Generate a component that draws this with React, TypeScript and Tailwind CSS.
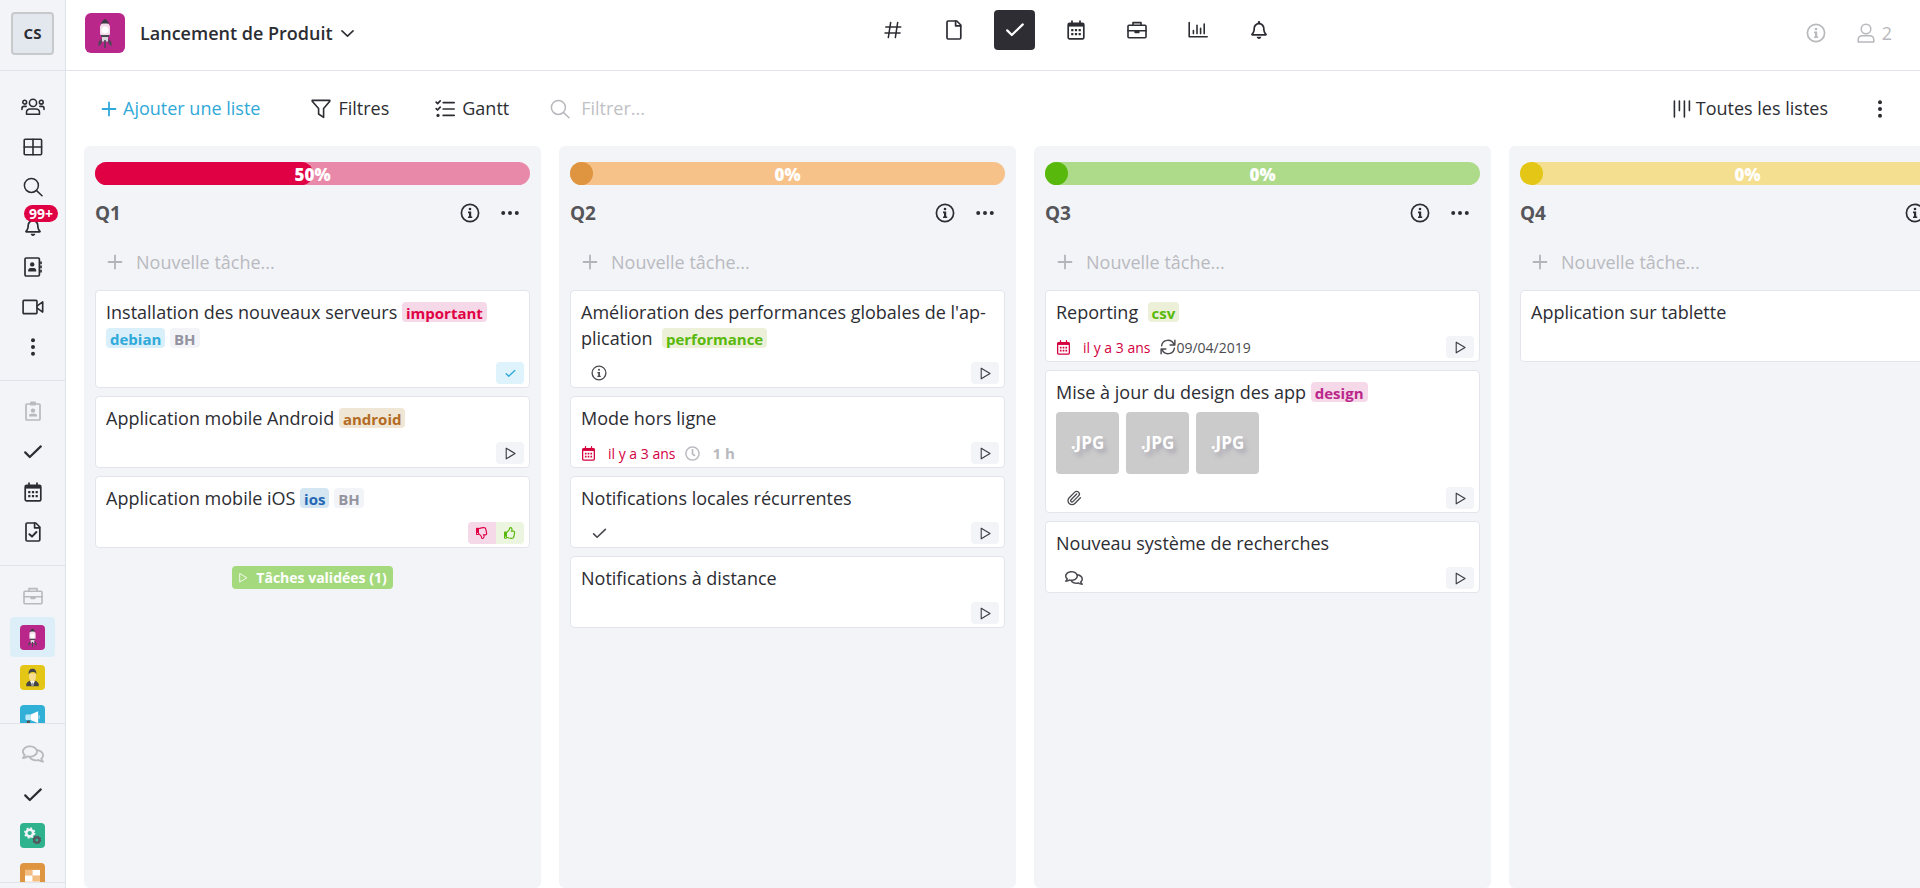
import { useState, type ReactNode } from "react";
import clsx from "clsx";
import { Paperclip } from "lucide-react";
import { FaRegBell, FaRegClock, FaRegComments, FaRegThumbsDown, FaRegThumbsUp } from "react-icons/fa";

interface Tag {
  label: string;
  color: string;
}

interface Task {
  title: string;
  tags?: Tag[];
  meta?: ReactNode;
  thumbs?: number;
  action?: "play" | "done" | "review" | "none";
}

interface List {
  name: string;
  progress: number;
  track: string;
  fill: string;
  tasks: Task[];
  validated?: number;
  wide?: boolean;
}

interface IconProps {
  size?: number;
  width?: number;
  children?: ReactNode;
}

function Icon({ size = 20, width = 1.6, children }: IconProps) {
  return (
    <svg
      width={size}
      height={size}
      viewBox="0 0 20 20"
      fill="none"
      stroke="currentColor"
      strokeWidth={width}
      strokeLinejoin="round"
      strokeLinecap="round"
      className="shrink-0"
      aria-hidden="true"
    >
      {children}
    </svg>
  );
}

const solid = { fill: "currentColor", stroke: "none" };

const UsersIcon = () => (
  <Icon size={24} width={1.3}>
    <circle cx="10" cy="6.6" r="3" />
    <circle cx="3.1" cy="6" r="1.6" />
    <circle cx="16.9" cy="6" r="1.6" />
    <path d="M4.6 16v-1.6a2.8 2.8 0 0 1 2.8-2.8h5.2a2.8 2.8 0 0 1 2.8 2.8V16z" />
    <path d="M.8 12v-.8c0-1 .8-1.7 1.7-1.7h1.8M19.2 12v-.8c0-1-.8-1.7-1.7-1.7h-1.8" />
  </Icon>
);

const TableIcon = () => (
  <Icon>
    <rect x="1.2" y="2.2" width="17.4" height="15.6" rx="1" />
    <path d="M10 2.2v15.6M1.2 10h17.4" />
  </Icon>
);

const SearchIcon = () => (
  <Icon width={1.5}>
    <circle cx="8.4" cy="8.4" r="7" />
    <path d="M13.6 13.6l5.4 5.2" />
  </Icon>
);

const ContactIcon = () => (
  <Icon width={1.7}>
    <rect x="2" y="1" width="14.4" height="18" rx="1.2" />
    <circle cx="9.2" cy="7.4" r="2.2" {...solid} />
    <path d="M5.2 14.4v-1c0-1.4 1-2.4 2.2-2.4H11c1.2 0 2.2 1 2.2 2.4v1z" {...solid} />
    <path d="M18 5v1.4M18 9.2v1.4M18 13.4v1.4" />
  </Icon>
);

const VideoIcon = () => (
  <Icon size={22} width={1.5}>
    <rect x="1" y="4" width="12.6" height="12" rx=".8" />
    <path d="M13.8 9l5-3.6v9.2l-5-3.6" />
  </Icon>
);

const BadgeIcon = () => (
  <Icon width={1.7}>
    <rect x="3" y="3" width="14" height="16" rx="1" />
    <path d="M8 3.6V1.4h4v2.2z" />
    <circle cx="10" cy="9.6" r="2.2" {...solid} />
    <path d="M6 15.6v-.8c0-1.2.9-2 2-2h4c1.1 0 2 .8 2 2v.8z" {...solid} />
  </Icon>
);

const CheckIcon = ({ size = 20, width = 2.2 }: IconProps) => (
  <Icon size={size} width={width}>
    <path d="M2.2 10.4l4.6 4.6L17.8 4.4" />
  </Icon>
);

const CalendarIcon = ({ size = 20 }: IconProps) => (
  <Icon size={size} width={1.7}>
    <rect x="2.2" y="3.4" width="15.6" height="15.4" rx="1.4" />
    <path d="M2.2 3.4h15.6v3.2H2.2z" {...solid} />
    <path d="M6 1v3M14 1v3" />
    <path
      d="M5.2 9h2.2v2.2H5.2zM8.9 9h2.2v2.2H8.9zM12.6 9h2.2v2.2h-2.2zM5.2 13h2.2v2.2H5.2zM8.9 13h2.2v2.2H8.9zM12.6 13h2.2v2.2h-2.2z"
      {...solid}
    />
  </Icon>
);

const FileIcon = ({ checked = false }: { checked?: boolean }) => (
  <Icon width={1.7}>
    <path d="M4.2 1h8.6l4 4v12.800a1.200 1.200 0 0 1-1.200 1.200H4.200A1.200 1.200 0 0 1 3 17.800V2.200A1.200 1.200 0 0 1 4.200 1z" />
    <path d="M11.6 1.2v4.6h5" />
    {checked && <path d="M6.4 12.2l2.6 2.4 4.4-4.6" strokeWidth={2} />}
  </Icon>
);

const BriefcaseIcon = () => (
  <Icon>
    <rect x="1" y="5.2" width="18" height="12.6" rx="1" />
    <path d="M6 5V2.6h8V5M1 10.8h18M8.2 10.8v1.6h3.6v-1.6" />
  </Icon>
);

const HashIcon = () => (
  <Icon size={18} width={1.7}>
    <path d="M7.4 1.6L4.8 18.4M15.2 1.6l-2.6 16.8M2 6.6h16.6M1.2 13.4h16.6" />
  </Icon>
);

const ChartIcon = () => (
  <Icon width={1.6}>
    <path d="M1.2 2.6v14.2h18M5.4 10.6v3M9 5.4v8.2M12.6 8.2v5.4M16.2 4v9.6" />
  </Icon>
);

const UserIcon = () => (
  <Icon width={1.5}>
    <circle cx="10" cy="6" r="4.8" />
    <path d="M2.2 19v-2c0-2.6 1.8-4.2 4.2-4.2h7.2c2.4 0 4.2 1.6 4.2 4.2v2z" />
  </Icon>
);

const InfoIcon = ({ size = 20 }: IconProps) => (
  <Icon size={size} width={1.7}>
    <circle cx="10" cy="10" r="8.6" />
    <circle cx="10" cy="6" r="1.3" {...solid} />
    <path d="M8 8.6h3.2v4.8h1V15H8v-1.6h1v-3.2H8z" {...solid} />
  </Icon>
);

const FilterIcon = () => (
  <Icon>
    <path d="M1.2 1.4h17.6v.8l-6.2 7.4v8.800l-5-3.400V9.600L1.200 2.200z" />
  </Icon>
);

const GanttIcon = () => (
  <Icon width={1.7}>
    <path d="M8.2 3.6h11M8.2 10h11M8.2 16.4h11M1.2 3.2l1.4 1.4 2.6-2.8M1.2 9.6l1.4 1.4 2.6-2.8" />
    <circle cx="3" cy="16.4" r="1.6" {...solid} />
  </Icon>
);

const BarsIcon = () => (
  <Icon width={1.6}>
    <path d="M2.4 2v16M7.4 2v9.600M12.400 2v16M17.400 2v9.600" />
  </Icon>
);

const PlusIcon = () => (
  <Icon size={18} width={2}>
    <path d="M2.8 10h14.4M10 2.8v14.4" />
  </Icon>
);

const PlayIcon = ({ size = 13 }: IconProps) => (
  <Icon size={size} width={1.7}>
    <path d="M3.4 1.8v16.4L17 10z" />
  </Icon>
);

const SyncIcon = () => (
  <Icon size={16} width={1.8}>
    <path d="M2 8.6A8 8 0 0 1 17.4 6.8M18 11.4A8 8 0 0 1 2.6 13.2M18.6 1.6v6h-6M1.4 18.4v-6h6" />
  </Icon>
);

const DotsIcon = ({ vertical = false }: { vertical?: boolean }) => (
  <Icon>
    {[3.2, 10, 16.8].map((p) => (
      <circle key={p} cx={vertical ? 10 : p} cy={vertical ? p : 10} r="2" {...solid} />
    ))}
  </Icon>
);

const tileColors = {
  rocket: "bg-[#ba278b]",
  manager: "bg-[#e4c716]",
  megaphone: "bg-[#30b0d6]",
  gears: "bg-[#2fb38f]",
  board: "bg-[#df9440]",
};

const drawings = {
  rocket: (
    <g>
      <path d="M16 11.500c0-2.400 2-4.500 4-5.500 2 1 4 3.100 4 5.500z" fill="#3c3c46" />
      <path d="M15 14c0-2 1.500-3.600 3-3.600h4c1.500 0 3 1.600 3 3.600v7l-1 1.500h-8L15 21z" fill="#f3dcea" />
      <circle cx="20" cy="17" r="3.6" fill="#fff" />
      <path d="M16 22h8v2h-8z" fill="#4a4a55" />
      <path d="M17 24h6v4.500h-6z" fill="#d5d5da" />
      <path d="M16.600 25.500L13.500 29v4.500l3.100-3zM23.400 25.500l3.100 3.500v4.500l-3.100-3zM19.200 27h1.600v8h-1.600z" fill="#4a4a55" />
    </g>
  ),
  manager: (
    <g>
      <path d="M10 34v-3c0-3 3-5 6-6h8c3 1 6 3 6 6v3z" fill="#444" />
      <path d="M16 25l4 9 4-9z" fill="#fff" />
      <path d="M19 28h2l1 6h-4z" fill="#999" />
      <path d="M14.5 13h11v6c0 4-2.500 7-5.500 7s-5.500-3-5.500-7z" fill="#f6dd90" />
      <path d="M14 15c-1-6 2-9 6-9s7 3 6 9c-1-3-2-4-4-4-3 0-6 0-8 4z" fill="#444" />
    </g>
  ),
  megaphone: (
    <g>
      <path d="M10 15h7v9h-7c-2 0-2-9 0-9z" fill="#b9e8f7" />
      <path d="M17 15l12-5v19l-12-5z" fill="#fff" />
      <path d="M30 15c2 2 2 6 0 8z" fill="#d9f2fb" />
      <path d="M11 25h5v8h-5z" fill="#555" />
    </g>
  ),
  gears: (
    <g fill="none">
      <circle cx="15.5" cy="16" r="5.4" stroke="#f2f5f7" strokeWidth="4" />
      <circle cx="15.5" cy="16" r="7.8" stroke="#f2f5f7" strokeWidth="2.6" strokeDasharray="3 3.12" />
      <circle cx="27" cy="27" r="4.2" stroke="#55555f" strokeWidth="3.6" />
      <circle cx="27" cy="27" r="6" stroke="#55555f" strokeWidth="2" strokeDasharray="2.4 2.3" />
    </g>
  ),
  board: (
    <g>
      <path d="M8 11h24v24H8z" fill="#fbe3c6" />
      <path d="M20 11h12v9H20zM8 20h12v9H8z" fill="#fff" />
      <path d="M8 11h12v9H8zM20 20h12v9H20z" fill="#f4bd82" />
    </g>
  ),
};

function Tile({ kind, large = false }: { kind: keyof typeof tileColors; large?: boolean }) {
  return (
    <span className={clsx("flex items-center justify-center", tileColors[kind], large ? "size-10 rounded-md" : "size-[25px] rounded")}>
      <svg viewBox="0 0 40 40" className="size-full" aria-hidden="true">
        {drawings[kind]}
      </svg>
    </span>
  );
}

const tagColors: Record<string, string> = {
  red: "bg-[#f6d9e8] text-[#df0144]",
  cyan: "bg-[#d9f0fa] text-[#30a9d9]",
  gray: "bg-[#f3f4f8] text-[#93939f]",
  brown: "bg-[#f0e6d5] text-[#b36b24]",
  blue: "bg-[#d3e6f2] text-[#2467b3]",
  green: "bg-[#ecf0d8] text-[#58b90c]",
  pink: "bg-[#f6d9e8] text-[#ba278b]",
};

const lists: List[] = [
  {
    name: "Q1",
    progress: 50,
    track: "bg-[#e989a9]",
    fill: "bg-[#df0144]",
    validated: 1,
    tasks: [
      {
        title: "Installation des nouveaux serveurs",
        tags: [
          { label: "important", color: "red" },
          { label: "debian", color: "cyan" },
          { label: "BH", color: "gray" },
        ],
        action: "done",
      },
      { title: "Application mobile Android", tags: [{ label: "android", color: "brown" }] },
      {
        title: "Application mobile iOS",
        tags: [
          { label: "ios", color: "blue" },
          { label: "BH", color: "gray" },
        ],
        action: "review",
      },
    ],
  },
  {
    name: "Q2",
    progress: 0,
    track: "bg-[#f7c28a]",
    fill: "bg-[#df9440]",
    tasks: [
      {
        title: "Amélioration des performances globales de l'ap\u00adplication\u00a0",
        tags: [{ label: "performance", color: "green" }],
        meta: <MetaIcon><InfoIcon size={16} /></MetaIcon>,
      },
      {
        title: "Mode hors ligne",
        meta: (
          <>
            <DueDate />
            <span className="ml-2.5 flex items-center gap-3 text-[15px] font-bold text-[#b8b8bd]">
              <FaRegClock size={15} />1 h
            </span>
          </>
        ),
      },
      { title: "Notifications locales récurrentes", meta: <MetaIcon><CheckIcon size={15} /></MetaIcon> },
      { title: "Notifications à distance" },
    ],
  },
  {
    name: "Q3",
    progress: 0,
    track: "bg-[#addb8a]",
    fill: "bg-[#58b90c]",
    tasks: [
      {
        title: "Reporting\u00a0",
        tags: [{ label: "csv", color: "green" }],
        meta: (
          <>
            <DueDate />
            <span className="ml-2.5 flex items-center">
              <SyncIcon />09/04/2019
            </span>
          </>
        ),
      },
      {
        title: "Mise à jour du design des app",
        tags: [{ label: "design", color: "pink" }],
        thumbs: 3,
        meta: <MetaIcon><Paperclip size={16} strokeWidth={2} /></MetaIcon>,
      },
      { title: "Nouveau système de recherches", meta: <MetaIcon><FaRegComments size={18} /></MetaIcon> },
    ],
  },
  {
    name: "Q4",
    progress: 0,
    track: "bg-[#f4de8f]",
    fill: "bg-[#e4c716]",
    wide: true,
    tasks: [{ title: "Application sur tablette", action: "none" }],
  },
];

function MetaIcon({ children }: { children: ReactNode }) {
  return <span className="flex w-9 justify-center">{children}</span>;
}

function DueDate() {
  return (
    <span className="flex items-center gap-3 text-[#d4003f]">
      <CalendarIcon size={15} />
      il y a 3 ans
    </span>
  );
}

function TaskAction({ action = "play" }: { action?: Task["action"] }) {
  if (action === "none") return null;
  if (action === "done") {
    return (
      <button aria-label="Terminée" className="flex h-[22px] w-7 items-center justify-center rounded bg-[#def3fb] text-[#30a9d9]">
        <CheckIcon size={11} width={2.4} />
      </button>
    );
  }
  if (action === "review") {
    return (
      <div className="flex">
        <button aria-label="Refuser" className="flex h-[22px] w-7 items-center justify-center rounded-l bg-[#f6d9e8] text-[#df0144]">
          <FaRegThumbsDown size={12} />
        </button>
        <button aria-label="Valider" className="flex h-[22px] w-7 items-center justify-center rounded-r bg-[#ecf5df] text-[#58b90c]">
          <FaRegThumbsUp size={12} />
        </button>
      </div>
    );
  }
  return (
    <button aria-label="Démarrer" className="flex h-[22px] w-7 items-center justify-center rounded bg-[#f3f4f8] text-[#3a3b42]">
      <PlayIcon />
    </button>
  );
}

function TaskCard({ task }: { task: Task }) {
  return (
    <li className="rounded border border-[#e2e5ec] bg-white pt-2 pr-[5px] pb-[3px] pl-2.5">
      <h3 className="text-[18px] leading-[26px]">
        {task.title}{" "}
        {task.tags?.map((t) => (
          <span key={t.label}>
            <span className={clsx("inline-block h-5 rounded px-1 text-[15px] leading-[22px] font-bold", tagColors[t.color])}>
              {t.label}
            </span>{" "}
          </span>
        ))}
      </h3>
      {task.thumbs && (
        <div className="mt-[7px] flex gap-[7px] pb-0.5">
          {Array.from({ length: task.thumbs }, (_, i) => (
            <div
              key={i}
              className="flex h-[62px] w-[63px] items-center justify-center rounded bg-[#cbcbcb] text-[17px] font-bold text-white [text-shadow:3px_4px_4px_#a9a6b2]"
            >
              .JPG
            </div>
          ))}
        </div>
      )}
      <div className="mt-[11px] flex h-[22px] items-center justify-between">
        <div className="flex items-center text-[14px] text-[#4a4b50]">{task.meta}</div>
        <TaskAction action={task.action} />
      </div>
    </li>
  );
}

function ListColumn({ list }: { list: List }) {
  return (
    <section className={clsx("shrink-0 rounded-md bg-[#f3f4f8] px-[11px] pt-4", list.wide ? "w-[477px]" : "w-[457px]")}>
      <div
        role="progressbar"
        aria-label={list.name}
        aria-valuenow={list.progress}
        className={clsx("relative h-[23px] rounded-full", list.track)}
      >
        <div className={clsx("h-full min-w-[23px] rounded-full", list.fill)} style={{ width: `${list.progress}%` }} />
        <span className="absolute inset-0 text-center text-[17px] leading-[26px] font-extrabold text-white">{list.progress}%</span>
      </div>
      <div className="mt-3 flex h-8 items-center">
        <h2 className="flex-1 text-[19px] font-bold text-[#55555a]">{list.name}</h2>
        <button aria-label="Informations" className="mr-5">
          <InfoIcon />
        </button>
        <button aria-label="Options" className="mr-2.5">
          <DotsIcon />
        </button>
      </div>
      <label className="mt-[17px] flex h-8 items-center gap-3 pl-[11px] text-[#b3b4ba]">
        <PlusIcon />
        <input
          aria-label="Nouvelle tâche"
          placeholder="Nouvelle tâche..."
          className="min-w-0 flex-1 bg-transparent text-[18px] outline-none placeholder:text-[#b9babf]"
        />
      </label>
      <ul className="mt-3 space-y-2">
        {list.tasks.map((t) => (
          <TaskCard key={t.title} task={t} />
        ))}
      </ul>
      {list.validated && (
        <div className="mt-[18px] flex justify-center">
          <button className="flex h-[23px] items-center gap-2 rounded bg-[#a5d97e] px-1.5 text-[14px] font-bold text-white">
            <PlayIcon size={10} />
            Tâches validées ({list.validated})
          </button>
        </div>
      )}
    </section>
  );
}

function SideItem({ label, active, children }: { label: string; active?: boolean; children: ReactNode }) {
  return (
    <button
      aria-label={label}
      className={clsx("relative mx-auto flex h-10 w-[45px] shrink-0 items-center justify-center rounded", active && "bg-[#dceef7]")}
    >
      {children}
    </button>
  );
}

function SideHeading({ children }: { children: ReactNode }) {
  return <div className="mb-px flex h-10 shrink-0 items-center justify-center text-[#b8b9bd]">{children}</div>;
}

function Sidebar() {
  return (
    <aside className="flex w-[66px] shrink-0 flex-col border-r border-[#e0e3ea] bg-[#f3f4f8]">
      <div className="flex h-[71px] shrink-0 justify-center border-b border-[#e0e3ea] pt-3">
        <button className="size-[43px] rounded border-2 border-[#c8c9cb] bg-[#e3e7ee] text-[15px] font-bold">CS</button>
      </div>
      <nav className="flex shrink-0 flex-col border-b border-[#e0e3ea] pt-4 pb-[13px]">
        <SideItem label="Équipe"><UsersIcon /></SideItem>
        <SideItem label="Tableaux"><TableIcon /></SideItem>
        <SideItem label="Rechercher"><SearchIcon /></SideItem>
        <SideItem label="Notifications">
          <FaRegBell size={18} />
          <span className="absolute -top-0.5 left-3.5 h-[17px] rounded-full bg-[#df0144] px-[5px] text-[14px] leading-[17px] font-bold text-white">99+</span>
        </SideItem>
        <SideItem label="Contacts"><ContactIcon /></SideItem>
        <SideItem label="Visio"><VideoIcon /></SideItem>
        <SideItem label="Plus"><DotsIcon vertical /></SideItem>
      </nav>
      <nav className="flex shrink-0 flex-col border-b border-[#e0e3ea] pt-2.5 pb-[13px]">
        <SideHeading><BadgeIcon /></SideHeading>
        <SideItem label="Mes tâches"><CheckIcon /></SideItem>
        <SideItem label="Mon agenda"><CalendarIcon /></SideItem>
        <SideItem label="Mes documents"><FileIcon checked /></SideItem>
      </nav>
      <nav className="flex min-h-0 flex-1 flex-col overflow-hidden border-b border-[#e0e3ea] pt-2.5">
        <SideHeading><BriefcaseIcon /></SideHeading>
        <SideItem label="Lancement de Produit" active><Tile kind="rocket" /></SideItem>
        <SideItem label="Ressources humaines"><Tile kind="manager" /></SideItem>
        <SideItem label="Marketing"><Tile kind="megaphone" /></SideItem>
      </nav>
      <nav className="mb-[5px] flex h-[159px] shrink-0 flex-col overflow-hidden border-b border-[#e0e3ea] pt-2.5">
        <SideHeading><FaRegComments size={22} /></SideHeading>
        <SideItem label="Tâches"><CheckIcon /></SideItem>
        <SideItem label="Technique"><Tile kind="gears" /></SideItem>
        <SideItem label="Organisation"><Tile kind="board" /></SideItem>
      </nav>
    </aside>
  );
}

const views = [
  { id: "Discussion", icon: <HashIcon /> },
  { id: "Documents", icon: <FileIcon /> },
  { id: "Tâches", icon: <CheckIcon /> },
  { id: "Agenda", icon: <CalendarIcon /> },
  { id: "Projet", icon: <BriefcaseIcon /> },
  { id: "Statistiques", icon: <ChartIcon /> },
  { id: "Alertes", icon: <FaRegBell size={18} /> },
];

function Header() {
  const [view, setView] = useState("Tâches");

  return (
    <header className="flex h-[71px] shrink-0 justify-between border-b border-[#e0e3ea] pr-7 pl-[19px]">
      <div className="flex h-[66px] items-center">
        <Tile kind="rocket" large />
        <button className="ml-[15px] flex items-center gap-2 text-[18px] font-semibold">
          Lancement de Produit
          <Icon size={13} width={2.4}>
            <path d="M1.5 6l8.5 8 8.5-8" />
          </Icon>
        </button>
      </div>
      <nav className="flex gap-5 pt-2.5">
        {views.map((v) => (
          <button
            key={v.id}
            aria-label={v.id}
            onClick={() => setView(v.id)}
            className={clsx("flex h-10 w-[41px] items-center justify-center rounded", view === v.id && "bg-[#2d2d33] text-white")}
          >
            {v.icon}
          </button>
        ))}
      </nav>
      <div className="flex h-[66px] items-center gap-[30px] pl-2 text-[#b8b9bd]">
        <button aria-label="Informations">
          <InfoIcon />
        </button>
        <button className="flex items-center gap-1.5 text-[18px]">
          <UserIcon />2
        </button>
      </div>
    </header>
  );
}

function Toolbar() {
  return (
    <div className="flex h-[75px] shrink-0 items-center pr-[30px] pl-[34px] text-[18px] font-medium">
      <button className="mr-[51px] flex items-center gap-[5px] text-[#30a9d9]">
        <PlusIcon />
        Ajouter une liste
      </button>
      <button className="mr-[46px] flex items-center gap-[7px]">
        <FilterIcon />
        Filtres
      </button>
      <button className="mr-[41px] flex items-center gap-[7px]">
        <GanttIcon />
        Gantt
      </button>
      <label className="flex flex-1 items-center gap-[11px] text-[#b8b9bd]">
        <SearchIcon />
        <input
          aria-label="Filtrer"
          placeholder="Filtrer..."
          className="w-40 bg-transparent text-[18px] outline-none placeholder:text-[#c0c1c5]"
        />
      </label>
      <button className="mr-[42px] flex items-center gap-1">
        <BarsIcon />
        Toutes les listes
      </button>
      <button aria-label="Options">
        <DotsIcon vertical />
      </button>
    </div>
  );
}

export default function App() {
  return (
    <div className="flex h-screen overflow-hidden bg-white font-['Segoe_UI','Open_Sans','Noto_Sans',sans-serif] text-[#2c2d33]">
      <Sidebar />
      <div className="flex min-w-0 flex-1 flex-col">
        <Header />
        <Toolbar />
        <main className="flex min-h-0 flex-1 gap-[18px] overflow-x-auto pl-[18px] [scrollbar-width:none]">
          {lists.map((l) => (
            <ListColumn key={l.name} list={l} />
          ))}
        </main>
      </div>
    </div>
  );
}
